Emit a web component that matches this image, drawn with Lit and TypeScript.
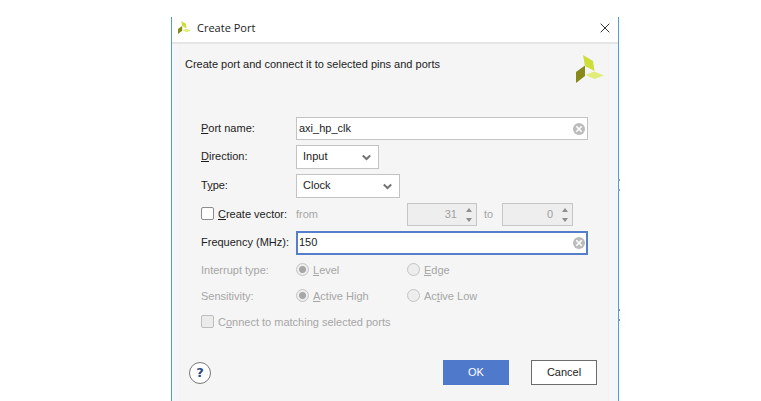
import { LitElement, html, css, svg } from "lit";
import { customElement, property } from "lit/decorators.js";

const logo = (cls: string) => html`<svg class=${cls} viewBox="0 0 28 28" aria-hidden="true">
  ${svg`<path d="M7 0 17 6 18.500 16 9 11Z" fill="#cddd3a"/><path d="M0 17 9 10.500 9 21 0 28Z" fill="#858a18"/><path d="M9.500 20 18 16.500 28 20.500 18.500 24Z" fill="#e2ec78"/>`}
</svg>`;

@customElement("clearable-input")
class ClearableInput extends LitElement {
  @property() name = "";
  @property() value = "";
  @property() label = "";
  @property({ type: Boolean, reflect: true }) active = false;

  static styles = css`
    :host { display: flex; align-items: center; box-sizing: border-box; height: 23px; padding: 0 2px; background: #fff; border: 1px solid #c3c3c3; }
    :host([active]) { height: 24px; padding: 0 1px; border: 2px solid #557fc9; }
    .field { flex: 1; min-width: 0; padding: 0 0 2px; border: 0; outline: 0; background: none; font: 11px "Liberation Sans", Arial, sans-serif; color: #1c1c1c; }
    .clear { display: flex; padding: 0; border: 0; background: none; }
    .icon { width: 12px; height: 12px; }
  `;

  render() {
    return html`
      <input class="field" type="text" name=${this.name} aria-label=${this.label} .value=${this.value} />
      <button class="clear" type="button" aria-label="Clear" @click=${() => (this.value = "")}>
        <svg class="icon" viewBox="0 0 12 12"><circle cx="6" cy="6" r="6" fill="#bcbcbc" /><path d="M3.3 3.3 8.7 8.7M8.7 3.3 3.3 8.7" stroke="#fff" stroke-width="1.6" /></svg>
      </button>`;
  }
}

@customElement("app-root")
class AppRoot extends LitElement {
  static styles = css`
    :host { display: grid; grid-template-columns: 171fr 448fr 142fr; box-sizing: border-box; min-height: 100vh; padding-top: 17px; background: #fff; font: 11px/16px "Liberation Sans", Arial, sans-serif; color: #1c1c1c; }
    .dialog { position: relative; grid-column: 2; display: flex; flex-direction: column; border: solid #559dcb; border-width: 0 1px; }
    .dialog::after { content: ""; position: absolute; left: 100%; top: 162px; width: 2px; height: 8px; border: dotted #8aa4b8; border-width: 2px 0; }
    .dialog::before { content: ""; position: absolute; left: 100%; top: 292px; width: 2px; height: 8px; border: dotted #7d93a8; border-width: 2px 0; }
    .titlebar { display: flex; align-items: center; box-sizing: border-box; height: 27px; padding: 0 8px 4px 6px; border-bottom: 2px solid #e5e5e6; }
    .mark { width: 13px; height: 13px; }
    .title { flex: 1; margin: 0 0 0 6px; font: 11px/16px "Open Sans", "Noto Sans", sans-serif; color: #222; }
    .close { display: flex; padding: 0; border: 0; background: none; }
    .close-icon { width: 10px; height: 10px; }
    .frame { flex: 1; display: flex; padding: 0 9px 0 7px; background: #f3f6fa; }
    .body { flex: 1; min-width: 0; padding: 0 10px 0 5px; background: #f5f5f5; border: solid #fbf1e8; border-width: 0 1px; }
    .intro { display: flex; justify-content: space-between; height: 73px; }
    .message { margin: 12px 0 0; }
    .brand { width: 28px; height: 28px; margin: 11px -6px 0 0; }
    .form { display: grid; grid-template-columns: 95px minmax(0, 1fr); row-gap: 5px; align-items: center; padding: 0 10px 0 16px; }
    .form > label { padding-bottom: 2px; }
    .text-row { box-sizing: border-box; height: 21px; padding-bottom: 2px; display: flex; align-items: center; }
    .wide { grid-column: 1 / -1; }
    .off { color: #a6a6a6; }
    u { text-underline-offset: 1px; }
    .check-label { display: flex; align-items: center; gap: 4px; white-space: nowrap; }
    .box { appearance: none; box-sizing: border-box; width: 13px; height: 13px; margin: 0; background: #fff; border: 1px solid #8c8c8c; border-radius: 2px; }
    .box:disabled { background: #ebebeb; border-color: #bdbdbd; }
    .picker { display: grid; align-items: center; width: 83px; }
    .picker.large { width: 104px; }
    .picker > * { grid-area: 1 / 1; }
    .select { appearance: none; box-sizing: border-box; width: 100%; height: 24px; padding: 0 20px 2px 6px; background: #fff; border: 1px solid #c3c3c3; border-radius: 0; font: inherit; color: inherit; }
    .chevron { justify-self: end; width: 9px; height: 7px; margin-right: 8px; pointer-events: none; }
    .range { display: grid; grid-template-columns: 111px 70px 25px 71px; align-items: center; }
    .word { padding-bottom: 2px; }
    .to { padding-left: 7px; }
    .spin { display: flex; align-items: center; box-sizing: border-box; height: 23px; padding-right: 3px; background: #eee; border: 1px solid #c6c6c6; }
    .number { appearance: textfield; flex: 1; min-width: 0; padding: 0 0 2px; border: 0; background: none; font: inherit; color: #a0a0a0; text-align: right; }
    .number::-webkit-inner-spin-button { display: none; }
    .arrows { width: 8px; height: 16px; margin-left: 8px; }
    .choices { display: grid; grid-template-columns: 111px 1fr; padding-bottom: 2px; }
    .choice { display: flex; align-items: center; gap: 4px; }
    .radio { appearance: none; box-sizing: border-box; width: 13px; height: 13px; margin: 0; border: 1px solid #c4c4c4; border-radius: 50%; background: #ededed; }
    .radio:checked { background: radial-gradient(circle, #a6a6a6 3px, #ededed 4px); }
    .footer { display: flex; align-items: center; margin-top: 27px; padding: 0 1px 17px 4px; }
    .help { box-sizing: border-box; width: 22px; height: 22px; margin-right: auto; padding: 0; border: 1px solid #777; border-radius: 50%; background: #fff; font: bold 13px/18px "DejaVu Sans", sans-serif; color: #2f4a86; }
    .button { box-sizing: border-box; width: 66px; height: 25px; margin-left: 22px; padding: 0 0 2px; border: 1px solid #6c6c6c; background: #fff; font: inherit; color: inherit; }
    .button.primary { border-color: #4f7acb; background: #4f7acb; color: #fff; }
  `;

  private picker(id: string, value: string, large = false) {
    return html`<div class="picker ${large ? "large" : ""}">
      <select class="select" id=${id}><option>${value}</option></select>
      <svg class="chevron" viewBox="0 0 9 7" aria-hidden="true"><path d="M.8 1.500 4.500 5 8.200 1.500" fill="none" stroke="#747474" stroke-width="2" /></svg>
    </div>`;
  }

  private spinner(label: string, value: number) {
    return html`<div class="spin">
      <input class="number" type="number" aria-label=${label} .value=${String(value)} disabled />
      <svg class="arrows" viewBox="0 0 8 16" aria-hidden="true"><path d="M1 5 4 1 7 5ZM1 11 4 15 7 11Z" fill="#8e8e8e" /></svg>
    </div>`;
  }

  private radio(group: string, label: unknown, checked = false) {
    return html`<label class="choice"><input class="radio" type="radio" name=${group} ?checked=${checked} disabled /><span>${label}</span></label>`;
  }

  render() {
    return html`
      <section class="dialog" role="dialog" aria-labelledby="title">
        <header class="titlebar">
          ${logo("mark")}
          <h1 class="title" id="title">Create Port</h1>
          <button class="close" aria-label="Close"><svg class="close-icon" viewBox="0 0 10 10"><path d="M.7.7 9.3 9.3M9.3.7.7 9.3" stroke="#333" /></svg></button>
        </header>
        <div class="frame">
          <div class="body">
            <div class="intro">
              <p class="message">Create port and connect it to selected pins and ports</p>
              ${logo("brand")}
            </div>
            <form class="form">
              <label for="port"><u>P</u>ort name:</label>
              <clearable-input id="port" name="port" label="Port name" value="axi_hp_clk"></clearable-input>
              <label for="direction"><u>D</u>irection:</label>
              ${this.picker("direction", "Input")}
              <label for="type">T<u>y</u>pe:</label>
              ${this.picker("type", "Clock", true)}
              <label class="check-label"><input class="box" type="checkbox" /><span><u>C</u>reate vector:</span></label>
              <div class="range off"><span class="word">from</span>${this.spinner("from", 31)}<span class="word to">to</span>${this.spinner("to", 0)}</div>
              <label for="frequency">Frequency (MHz):</label>
              <clearable-input id="frequency" name="frequency" label="Frequency (MHz)" value="150" active></clearable-input>
              <span class="text-row off">Interrupt type:</span>
              <div class="choices off" role="radiogroup" aria-label="Interrupt type">
                ${this.radio("interrupt", html`<u>L</u>evel`, true)}${this.radio("interrupt", html`<u>E</u>dge`)}
              </div>
              <span class="text-row off">Sensitivity:</span>
              <div class="choices off" role="radiogroup" aria-label="Sensitivity">
                ${this.radio("sensitivity", html`<u>A</u>ctive High`, true)}${this.radio("sensitivity", html`Ac<u>t</u>ive Low`)}
              </div>
              <div class="text-row wide off">
                <label class="check-label"><input class="box" type="checkbox" disabled /><span>C<u>o</u>nnect to matching selected ports</span></label>
              </div>
            </form>
            <footer class="footer">
              <button class="help" aria-label="Help">?</button>
              <button class="button primary">OK</button>
              <button class="button">Cancel</button>
            </footer>
          </div>
        </div>
      </section>`;
  }
}
